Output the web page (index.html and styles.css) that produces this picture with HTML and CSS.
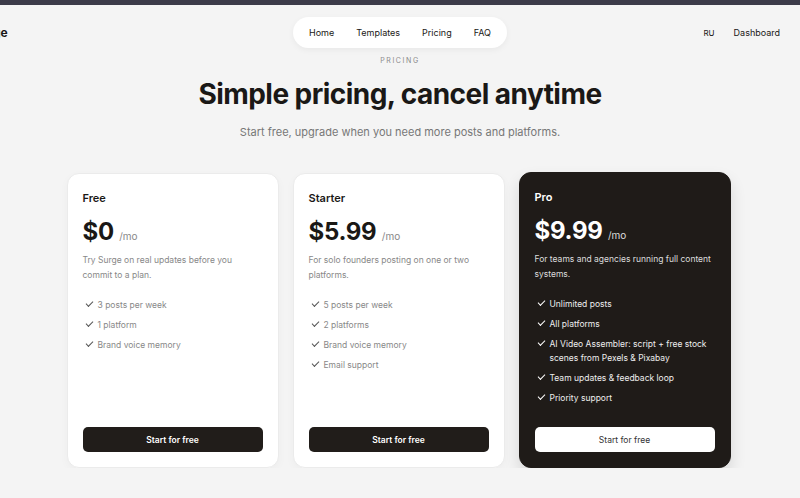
FILE: index.html
```html
<!DOCTYPE html>
<html lang="en">
<head>
    <meta charset="UTF-8">
    <meta name="viewport" content="width=device-width, initial-scale=1.0">
    <title>Pricing</title>
    <link rel="stylesheet" href="styles.css">
</head>
<body>
  <div class="topbar"></div>

  <header class="header">
    <a class="logo" href="#">Surge</a>
    <nav class="nav">
      <a href="#">Home</a>
      <a href="#">Templates</a>
      <a href="#">Pricing</a>
      <a href="#">FAQ</a>
    </nav>
    <div class="header-right">
      <a class="lang" href="#">RU</a>
      <a href="#">Dashboard</a>
    </div>
  </header>

  <section class="pricing">
    <p class="eyebrow">PRICING</p>
    <h1>Simple pricing, cancel anytime</h1>
    <p class="lead">Start free, upgrade when you need more posts and platforms.</p>

    <div class="plans">
      <article class="plan">
        <h2>Free</h2>
        <div class="price">$0 <span>/mo</span></div>
        <p class="desc">Try Surge on real updates before you commit to a plan.</p>
        <ul>
          <li>3 posts per week</li>
          <li>1 platform</li>
          <li>Brand voice memory</li>
        </ul>
        <button type="button">Start for free</button>
      </article>

      <article class="plan">
        <h2>Starter</h2>
        <div class="price">$5.99 <span>/mo</span></div>
        <p class="desc">For solo founders posting on one or two platforms.</p>
        <ul>
          <li>5 posts per week</li>
          <li>2 platforms</li>
          <li>Brand voice memory</li>
          <li>Email support</li>
        </ul>
        <button type="button">Start for free</button>
      </article>

      <article class="plan pro">
        <h2>Pro</h2>
        <div class="price">$9.99 <span>/mo</span></div>
        <p class="desc">For teams and agencies running full content systems.</p>
        <ul>
          <li>Unlimited posts</li>
          <li>All platforms</li>
          <li>AI Video Assembler: script + free stock scenes from Pexels &amp; Pixabay</li>
          <li>Team updates &amp; feedback loop</li>
          <li>Priority support</li>
        </ul>
        <button type="button">Start for free</button>
      </article>
    </div>
  </section>
</body>
</html>
```

FILE: styles.css
```css
* {
    box-sizing: border-box;
}

body {
    margin: 0;
    background: #f4f4f4;
    font-family: Inter, "Noto Sans", sans-serif;
    color: #1a1816;
    overflow: hidden;
}

a {
    color: inherit;
    text-decoration: none;
}

.topbar {
    height: 5px;
    background: #3c3b49;
}

.header {
    display: grid;
    grid-template-columns: 1fr auto 1fr;
    align-items: center;
    padding: 12px 20px 0 20px;
}

.logo {
    justify-self: start;
    margin-left: -47px;
    font-size: 12px;
    font-weight: 700;
}

.nav {
    display: flex;
    gap: 22px;
    height: 31px;
    align-items: center;
    padding: 0 16px 0 16px;
    background: #fff;
    border-radius: 16px;
    box-shadow: 0 2px 6px rgba(0, 0, 0, 0.05);
    font-size: 9px;
}

.header-right {
    display: flex;
    justify-content: flex-end;
    align-items: center;
    gap: 19px;
    font-size: 9px;
}

.header-right .lang {
    font-size: 8px;
}

.pricing {
    text-align: center;
}

.eyebrow {
    margin: 8px 0 0;
    font-size: 7px;
    letter-spacing: 1.6px;
    color: #8a8a8a;
}

h1 {
    margin: 12px 0 0;
    font-size: 28px;
    font-weight: 700;
    letter-spacing: -0.55px;
}

.lead {
    margin: 14px 0 0;
    font-size: 11px;
    color: #777;
}

.plans {
    display: flex;
    justify-content: center;
    align-items: flex-start;
    gap: 14px;
    margin-top: 34px;
    padding-right: 3px;
    text-align: left;
}

.plan {
    display: flex;
    flex-direction: column;
    width: 212px;
    height: 295px;
    padding: 17px 15px 15px;
    background: #fff;
    border: 1px solid #ebebeb;
    border-radius: 12px;
    box-shadow: 0 3px 10px rgba(0, 0, 0, 0.03);
}

.plan h2 {
    margin: 0;
    font-size: 11px;
    font-weight: 600;
}

.price {
    margin-top: 12px;
    font-size: 24px;
    font-weight: 700;
    letter-spacing: -0.3px;
}

.price span {
    font-size: 10px;
    font-weight: 400;
    color: #888;
    letter-spacing: 0;
}

.desc {
    margin: 7px 0 0;
    font-size: 8.5px;
    line-height: 15px;
    color: #888;
}

.plan ul {
    list-style: none;
    margin: 15px 0 0;
    padding: 0;
    display: flex;
    flex-direction: column;
    gap: 6px;
}

.plan li {
    position: relative;
    padding-left: 15px;
    font-size: 8.5px;
    line-height: 14px;
    color: #888;
}

.plan li::before {
    content: "";
    position: absolute;
    left: 3px;
    top: 3px;
    width: 6px;
    height: 3px;
    border-left: 1px solid #555;
    border-bottom: 1px solid #555;
    transform: rotate(-45deg);
}

.plan button {
    margin-top: auto;
    height: 25px;
    flex-shrink: 0;
    border: 0;
    border-radius: 5px;
    background: #211d1a;
    color: #fff;
    font-family: inherit;
    font-size: 8.5px;
    font-weight: 600;
}

.pro {
    margin-top: -1px;
    height: 296px;
    background: #1f1b18;
    border-color: #1f1b18;
    color: #fff;
    box-shadow: 0 8px 16px rgba(0, 0, 0, 0.12);
}

.pro .price span,
.pro .desc {
    color: #ddd;
}

.pro li {
    color: #eee;
}

.pro li::before {
    border-color: #fff;
    border-width: 1.5px;
}

.pro button {
    background: #fff;
    color: #333;
    font-weight: 400;
}
```
